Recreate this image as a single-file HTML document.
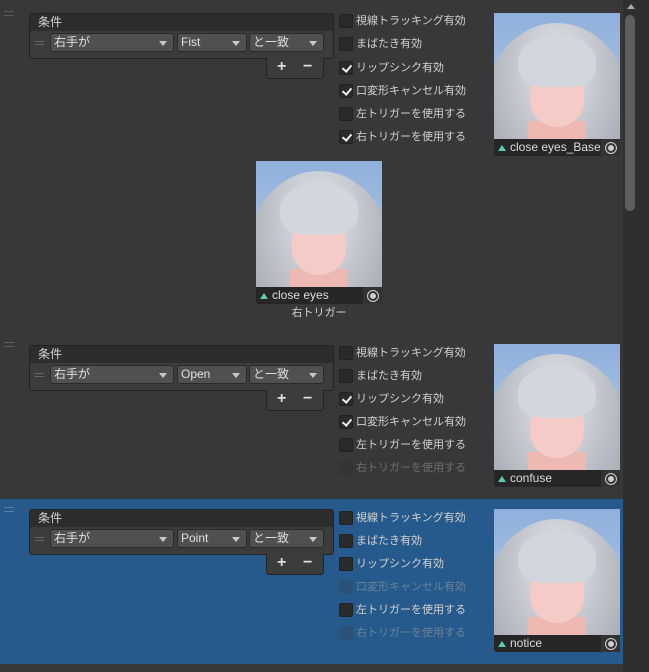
<!DOCTYPE html><html><head><meta charset="utf-8"><style>
*{box-sizing:border-box;margin:0;padding:0}
body{width:649px;height:672px;background:#383838;position:relative;overflow:hidden;font-family:"Liberation Sans","Noto Sans CJK JP",sans-serif;font-size:11px;color:#d2d2d2}
.a{position:absolute}
.sel{position:absolute;left:0;top:499px;width:623px;height:165px;background:#265a8c}
.sb{position:absolute;left:623px;top:0;width:26px;height:672px;background:#2f2f2f}
.thumb{position:absolute;left:625px;top:15px;width:10px;height:196px;background:#5e5e5e;border-radius:5px}
.h{position:absolute;width:10px;height:5px;border-top:1px solid #5a5a5a;border-bottom:1px solid #5a5a5a}
.box{position:absolute;left:29px;width:305px;height:46px;background:#3c3c3c;border:1px solid #232323;border-radius:3px}
.box .hd{height:17px;background:#2d2d2d;padding-left:8px;line-height:16px;border-radius:2px 2px 0 0;font-size:12px}
.box .hh{left:5px;top:27px;width:9px;height:4px;border-color:#666}
.dd{position:absolute;top:19px;height:19px;background:#505050;border:1px solid #2a2a2a;border-radius:3px;padding-left:3px;line-height:17px;color:#e0e0e0;font-size:12px}
.dd:after{content:"";position:absolute;right:6px;top:7px;border-left:4px solid transparent;border-right:4px solid transparent;border-top:5px solid #c8c8c8}
.pm{position:absolute;left:266px;width:58px;height:21px;background:#3c3c3c;border:1px solid #232323;border-top:none;border-radius:0 0 3px 3px;font-size:16px;font-weight:bold;color:#ddd}
.pm span{position:absolute;top:0px}
.cb{position:absolute;left:339px;width:14px;height:14px;background:#2a2a2a;border:1px solid #222;border-radius:2px}
.cb.on:after{content:"";position:absolute;left:4px;top:1px;width:4px;height:7px;border-right:2px solid #eee;border-bottom:2px solid #eee;transform:rotate(40deg)}
.cb.dis{background:#333;border-color:#333;opacity:.6}
.lb{position:absolute;left:356px;line-height:14px;color:#d2d2d2}
.lb.dis{color:#6e6e6e}
.sel .lb.dis,.lbd2{color:#6a8299}
.pic{position:absolute;width:126px;height:126px;overflow:hidden;background:linear-gradient(#8fb0dc,#b6cbe6)}
.pic .hair{position:absolute;left:-8px;top:10px;width:142px;height:160px;border-radius:50% 50% 25% 25%;background:radial-gradient(ellipse at 50% 30%,#e4e6ea,#b6bac1 60%,#979ca6)}
.pic .face{position:absolute;left:36px;top:62px;width:54px;height:52px;border-radius:35% 35% 50% 50%;background:#f4cbc7}
.pic .fr{position:absolute;left:24px;top:22px;width:78px;height:52px;border-radius:50% 50% 35% 35%;background:#d3d6dc}
.pic .neck{position:absolute;left:34px;top:108px;width:58px;height:20px;background:#eeb8b3}
.cap{position:absolute;width:126px;height:17px;background:#262626;border-radius:0 0 3px 3px;color:#ddd;font-size:12px;line-height:17px;padding-left:16px}
.cap:before{content:"";position:absolute;left:4px;top:6px;border-left:4px solid transparent;border-right:4px solid transparent;border-bottom:6px solid #5fc9b4}
.cap i{position:absolute;right:0;top:0;width:19px;height:17px;background:#333;font-style:normal}
.cap i:after{content:"";position:absolute;left:4px;top:3px;width:10px;height:10px;border:1px solid #ccc;border-radius:50%;box-shadow:inset 0 0 0 2px #333,inset 0 0 0 5px #ccc}
</style></head><body>
<div class="sel"></div>
<div class="sb"></div><div class="thumb"></div>
<div class="a" style="left:627px;top:4px;border-left:4px solid transparent;border-right:4px solid transparent;border-bottom:5px solid #aaa"></div>

<div class="h" style="left:4px;top:11px"></div>
<div class="box" style="top:13px"><div class="hd">条件</div><div class="h hh"></div>
<div class="dd" style="left:20px;width:124px">右手が</div><div class="dd" style="left:147px;width:70px">Fist</div><div class="dd" style="left:219px;width:75px">と一致</div></div>
<div class="pm" style="top:58px"><span style="left:10px">+</span><span style="left:36px">−</span></div>
<div class="cb" style="top:14px"></div><div class="lb" style="top:14px">視線トラッキング有効</div>
<div class="cb" style="top:37px"></div><div class="lb" style="top:37px">まばたき有効</div>
<div class="cb on" style="top:61px"></div><div class="lb" style="top:61px">リップシンク有効</div>
<div class="cb on" style="top:84px"></div><div class="lb" style="top:84px">口変形キャンセル有効</div>
<div class="cb" style="top:107px"></div><div class="lb" style="top:107px">左トリガーを使用する</div>
<div class="cb on" style="top:130px"></div><div class="lb" style="top:130px">右トリガーを使用する</div>
<div class="pic" style="left:494px;top:13px"><div class="hair"></div><div class="neck"></div><div class="face"></div><div class="fr"></div></div>
<div class="cap" style="left:494px;top:139px;overflow:hidden;white-space:nowrap">close eyes_Base<i></i></div>

<div class="pic" style="left:256px;top:161px"><div class="hair"></div><div class="neck"></div><div class="face"></div><div class="fr"></div></div>
<div class="cap" style="left:256px;top:287px">close eyes<i></i></div>
<div class="a" style="left:256px;width:126px;top:306px;text-align:center;line-height:14px">右トリガー</div>

<div class="h" style="left:4px;top:342px"></div>
<div class="box" style="top:345px"><div class="hd">条件</div><div class="h hh"></div>
<div class="dd" style="left:20px;width:124px">右手が</div><div class="dd" style="left:147px;width:70px">Open</div><div class="dd" style="left:219px;width:75px">と一致</div></div>
<div class="pm" style="top:390px"><span style="left:10px">+</span><span style="left:36px">−</span></div>
<div class="cb" style="top:346px"></div><div class="lb" style="top:346px">視線トラッキング有効</div>
<div class="cb" style="top:369px"></div><div class="lb" style="top:369px">まばたき有効</div>
<div class="cb on" style="top:392px"></div><div class="lb" style="top:392px">リップシンク有効</div>
<div class="cb on" style="top:415px"></div><div class="lb" style="top:415px">口変形キャンセル有効</div>
<div class="cb" style="top:438px"></div><div class="lb" style="top:438px">左トリガーを使用する</div>
<div class="cb dis" style="top:461px"></div><div class="lb dis" style="top:461px">右トリガーを使用する</div>
<div class="pic" style="left:494px;top:344px"><div class="hair"></div><div class="neck"></div><div class="face"></div><div class="fr"></div></div>
<div class="cap" style="left:494px;top:470px">confuse<i></i></div>

<div class="h" style="left:4px;top:507px;border-color:#5d7d9c"></div>
<div class="box" style="top:509px"><div class="hd">条件</div><div class="h hh"></div>
<div class="dd" style="left:20px;width:124px">右手が</div><div class="dd" style="left:147px;width:70px">Point</div><div class="dd" style="left:219px;width:75px">と一致</div></div>
<div class="pm" style="top:554px"><span style="left:10px">+</span><span style="left:36px">−</span></div>
<div class="cb" style="top:511px"></div><div class="lb" style="top:511px">視線トラッキング有効</div>
<div class="cb" style="top:534px"></div><div class="lb" style="top:534px">まばたき有効</div>
<div class="cb" style="top:557px"></div><div class="lb" style="top:557px">リップシンク有効</div>
<div class="cb dis" style="top:580px;background:#2f4f6e;border-color:#2f4f6e"></div><div class="lb lbd2" style="top:580px">口変形キャンセル有効</div>
<div class="cb" style="top:603px"></div><div class="lb" style="top:603px">左トリガーを使用する</div>
<div class="cb dis" style="top:626px;background:#2f4f6e;border-color:#2f4f6e"></div><div class="lb lbd2" style="top:626px">右トリガーを使用する</div>
<div class="pic" style="left:494px;top:509px"><div class="hair"></div><div class="neck"></div><div class="face"></div><div class="fr"></div></div>
<div class="cap" style="left:494px;top:635px">notice<i></i></div>
</body></html>
